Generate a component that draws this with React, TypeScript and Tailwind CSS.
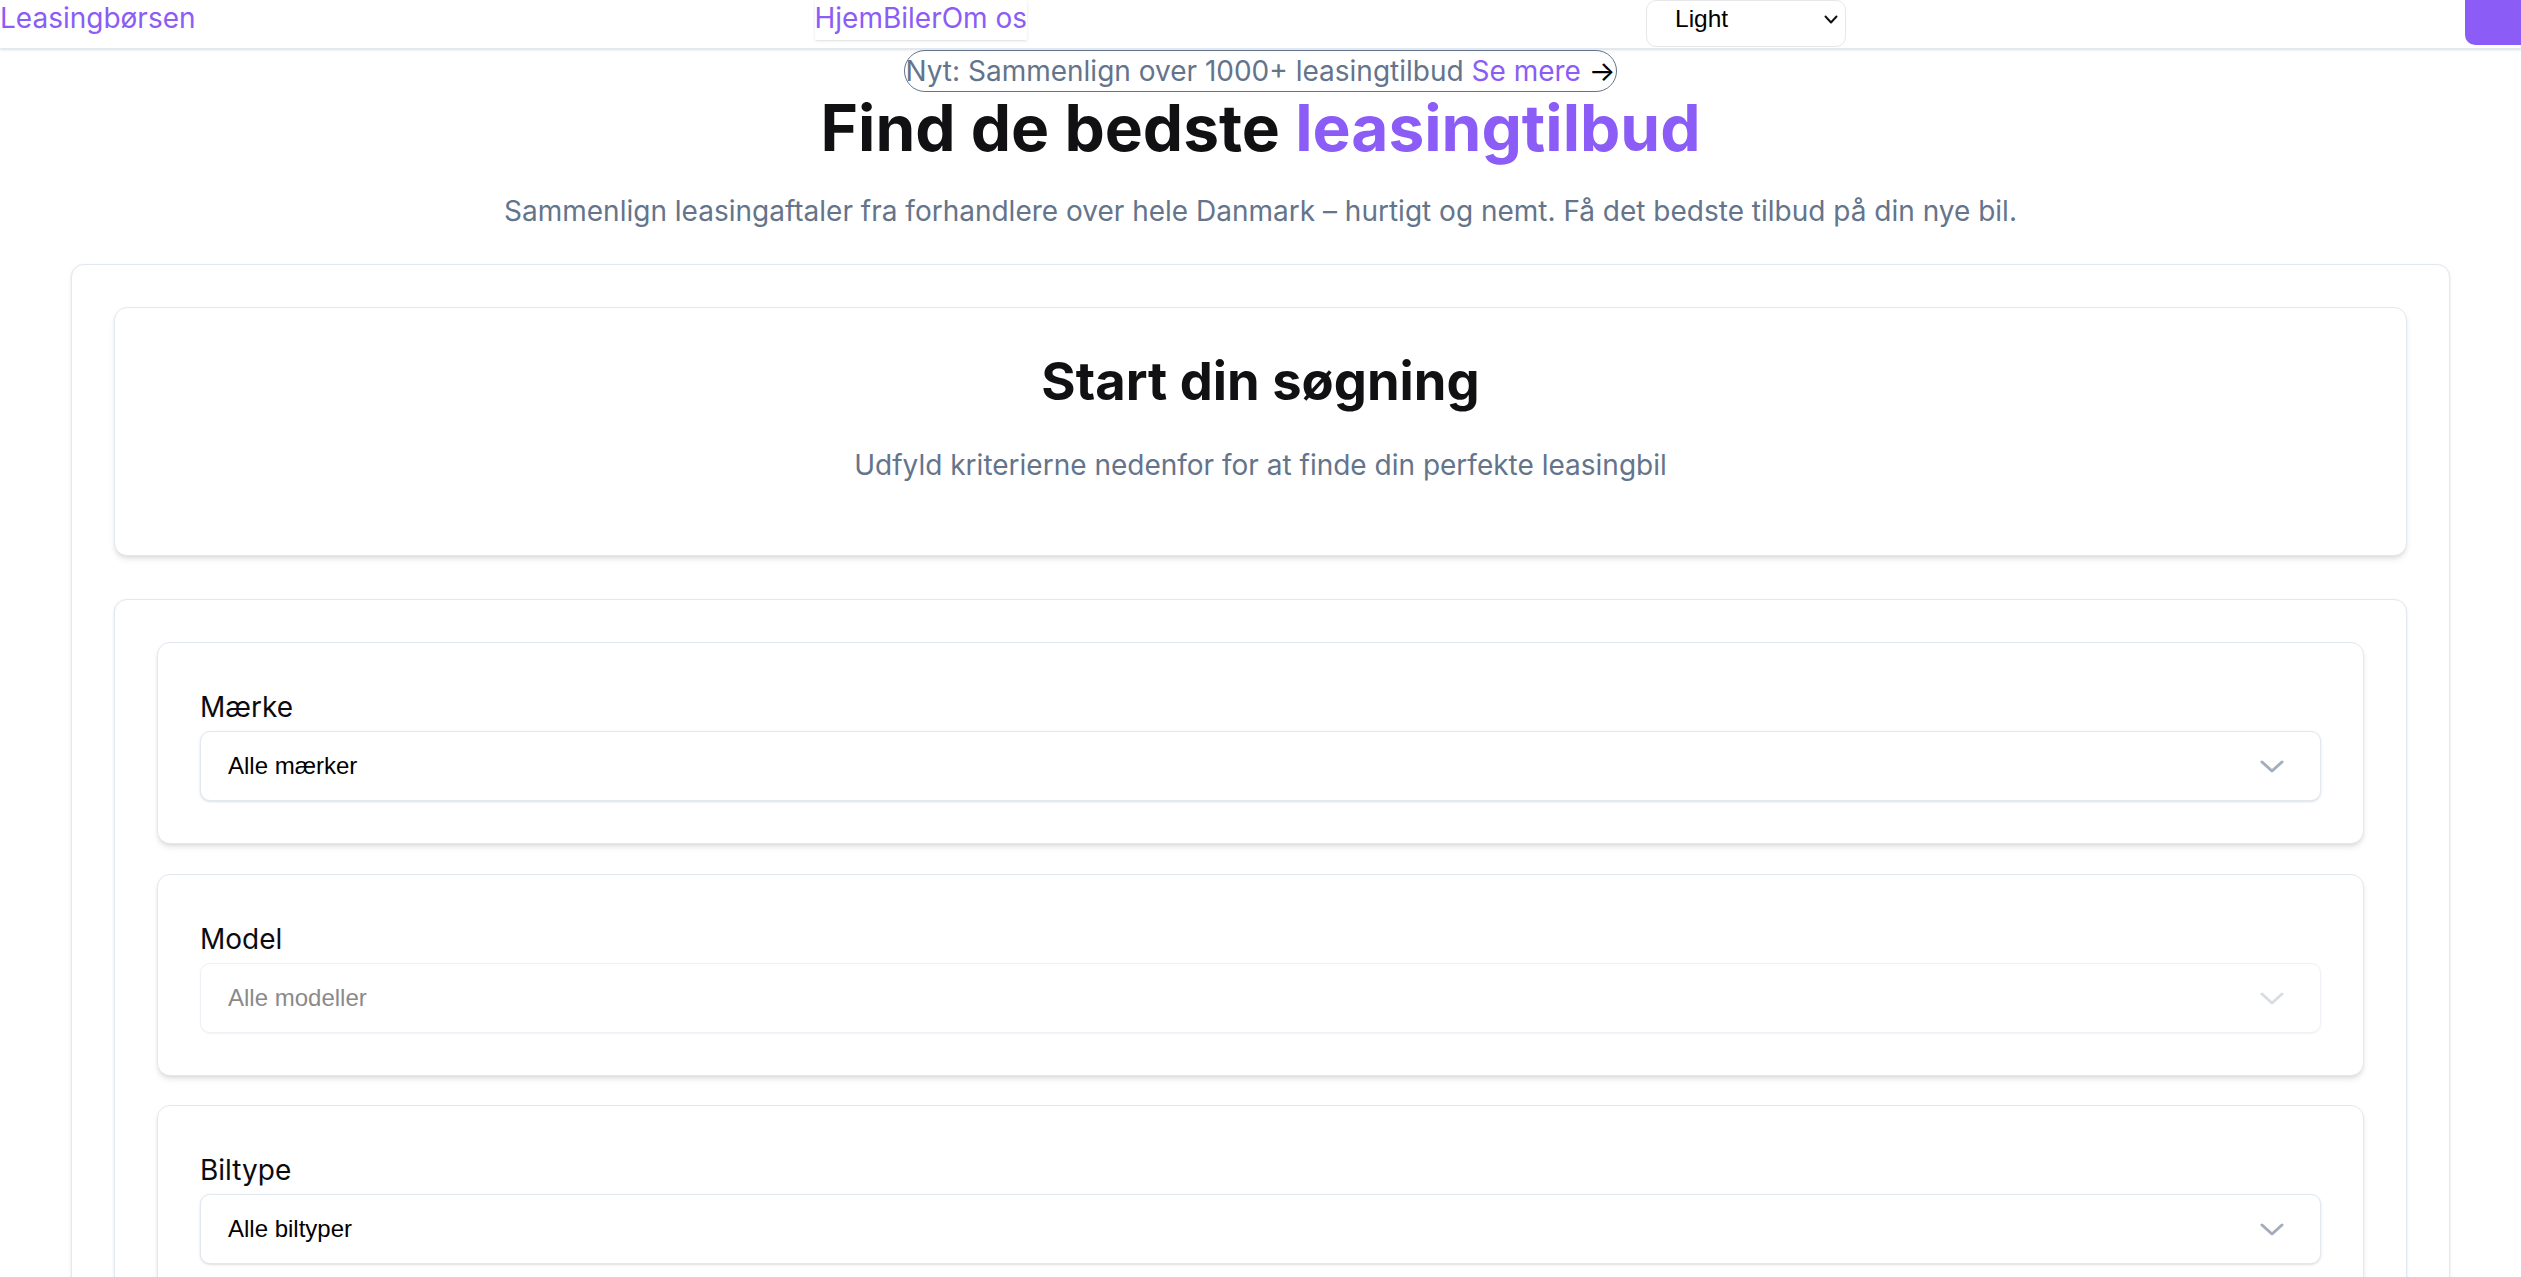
import React from "react";

const felter = [
  { label: "Mærke", placeholder: "Alle mærker", disabled: false },
  { label: "Model", placeholder: "Alle modeller", disabled: true },
  { label: "Biltype", placeholder: "Alle biltyper", disabled: false },
];

const Chevron = ({ muted }: { muted?: boolean }) => (
  <svg
    className="pointer-events-none absolute right-[37px] top-[29px]"
    width="24"
    height="13"
    viewBox="0 0 24 13"
    fill="none"
    stroke={muted ? "#d8dde4" : "#a3adbb"}
    strokeWidth="3"
    strokeLinecap="round"
    strokeLinejoin="round"
  >
    <path d="M2 2l10 9 10-9" />
  </svg>
);

const Felt = ({
  label,
  placeholder,
  disabled,
}: {
  label: string;
  placeholder: string;
  disabled: boolean;
}) => (
  <div className="rounded-[13px] border border-[#e2e8f0] bg-white p-[42px] shadow-md">
    <label className="block text-[28px] leading-[44px] text-[#0b0b0f]">
      {label}
    </label>
    <div className="relative mt-[2px]">
      <select
        disabled={disabled}
        className={
          disabled
            ? "h-[70px] w-full appearance-none rounded-[10px] border border-[#eef1f5] bg-white pl-[27px] font-['Liberation_Sans',Arial,sans-serif] text-[24px] text-[#8a8a8a] shadow-xs"
            : "h-[70px] w-full appearance-none rounded-[10px] border border-[#e2e8f0] bg-white pl-[27px] font-['Liberation_Sans',Arial,sans-serif] text-[24px] text-black shadow-sm"
        }
      >
        <option>{placeholder}</option>
      </select>
      <Chevron muted={disabled} />
    </div>
  </div>
);

export default function App() {
  return (
    <div className="min-h-screen bg-white font-[Inter,sans-serif]">
      <header className="flex h-[49px] items-start justify-between border-b border-[#e2e8f0] bg-white shadow-sm">
        <a href="#" className="text-[28px] leading-[36px] text-[#8b5cf6]">
          Leasingbørsen
        </a>
        <nav className="flex h-[40px] bg-white text-[28px] leading-[36px] text-[#8b5cf6] shadow-sm">
          <a href="#">Hjem</a>
          <a href="#">Biler</a>
          <a href="#">Om os</a>
        </nav>
        <div className="relative h-[47px] w-[200px]">
          <select className="h-full w-full appearance-none rounded-[10px] border border-[#e5e7eb] bg-white pb-[12px] pl-[28px] font-['Liberation_Sans',Arial,sans-serif] text-[24.5px] text-black">
            <option>Light</option>
            <option>Dark</option>
            <option>System</option>
          </select>
          <svg
            className="pointer-events-none absolute right-[8px] top-[15px]"
            width="14"
            height="9"
            viewBox="0 0 14 9"
            fill="none"
            stroke="#111"
            strokeWidth="2"
            strokeLinecap="round"
            strokeLinejoin="round"
          >
            <path d="M1.5 1.5l5.5 6 5.5-6" />
          </svg>
        </div>
        <button
          aria-label="Menu"
          className="h-[45px] w-[56px] rounded-bl-[10px] bg-[#8b5cf6]"
        />
      </header>

      <main className="flex flex-col items-center">
        <a
          href="#"
          className="mt-[1px] rounded-full border-[1.5px] border-[#64748b] text-[28px] leading-[40px] text-[#64748b]"
        >
          Nyt: Sammenlign over 1000+ leasingtilbud{" "}
          <span className="text-[#8b5cf6]">Se mere</span>{" "}
          <span className="text-black">→</span>
        </a>

        <h1 className="mt-[4px] text-[64px] leading-none font-bold text-[#111113]">
          Find de bedste <span className="text-[#8b5cf6]">leasingtilbud</span>
        </h1>

        <p className="mt-[30px] text-[28px] leading-[43px] text-[#64748b]">
          Sammenlign leasingaftaler fra forhandlere over hele Danmark – hurtigt
          og nemt. Få det bedste tilbud på din nye bil.
        </p>

        <section className="mt-[31px] w-full px-[71px]">
          <div className="rounded-[13px] border border-[#e2e8f0] bg-white p-[42px] shadow-sm">
            <div className="rounded-[13px] border border-[#e2e8f0] bg-white pt-[43px] pb-[69px] text-center shadow-md">
              <h2 className="text-[52.5px] leading-[61.4px] font-bold text-[#111113]">
                Start din søgning
              </h2>
              <p className="mt-[32px] text-[28px] leading-[42px] text-[#64748b]">
                Udfyld kriterierne nedenfor for at finde din perfekte
                leasingbil
              </p>
            </div>

            <div className="mt-[43px] rounded-[13px] border border-[#e2e8f0] bg-white p-[42px] shadow-sm">
              <div className="flex flex-col gap-[29.5px]">
                {felter.map((f) => (
                  <Felt key={f.label} {...f} />
                ))}
              </div>
            </div>
          </div>
        </section>
      </main>
    </div>
  );
}
